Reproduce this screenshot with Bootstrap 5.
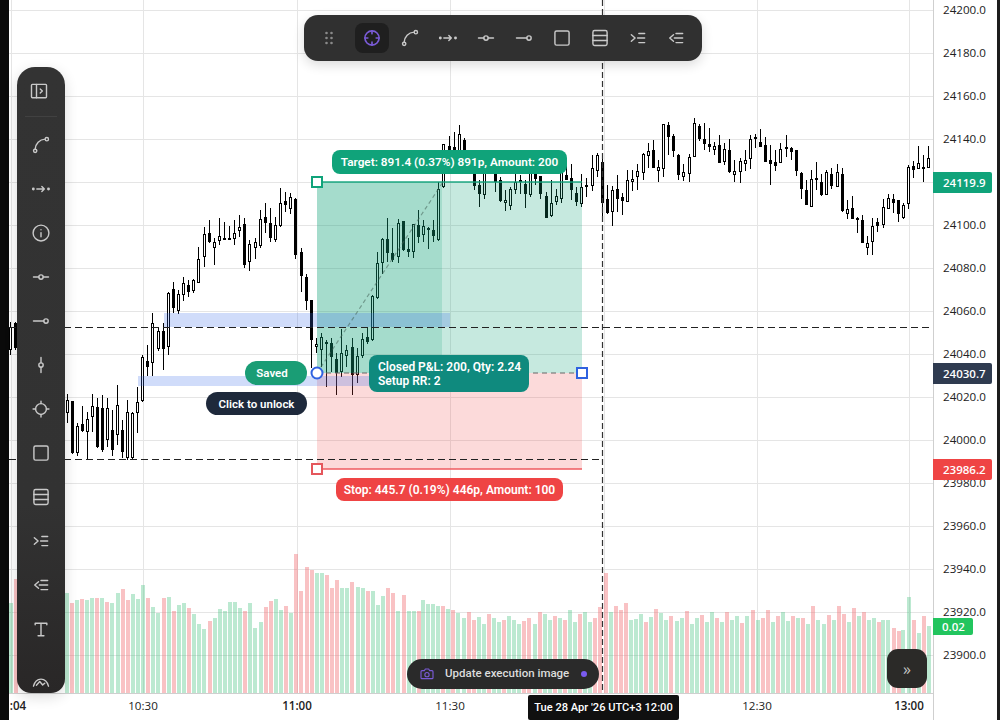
<!DOCTYPE html>
<html lang="en">
<head>
  <meta charset="UTF-8">
  <meta name="viewport" content="width=device-width, initial-scale=1.0">
  <title>Chart</title>
  <link href="https://cdn.jsdelivr.net/npm/bootstrap@5.3.0/dist/css/bootstrap.min.css" rel="stylesheet">
  <style>
    body { margin: 0; background: #fff; overflow: hidden; font-family: Roboto, "Liberation Sans", sans-serif; }
    .term { width: 1000px; height: 720px; overflow: hidden; }
    .edge-left { width: 9px; background: #0a0a0a; }
    .edge-right { width: 3px; background: #1c1c1c; }
    .plot { left: 0; top: 0; }

    .ic { width: 20px; height: 20px; fill: none; stroke: currentColor; stroke-width: 1.7; stroke-linecap: round; stroke-linejoin: round; }
    .tool-btn { width: 34px; height: 30px; padding: 0; border: 0; border-radius: 8px; color: #c9c9c9; display: flex; align-items: center; justify-content: center; }
    .tool-btn.is-on { background: #1f1f1f; color: #7a5bd6; }

    .side-bar { left: 17px; top: 67px; width: 48px; height: 626px; padding-top: 2px; overflow: hidden; border-radius: 18px 18px 14px 14px; background: linear-gradient(#333333, #323232 70%, #292727); box-shadow: 0 4px 14px rgba(0,0,0,.14); }
    .side-bar .tool-btn { height: 44px; flex: none; }
    .side-first .ic { margin-right: 5px; }
    .side-rule { width: 32px; height: 1px; background: #414141; margin: 3px 0 6px; flex: none; }
    .side-last { margin-top: 9px; }

    .top-bar { left: 304px; top: 15px; width: 398px; height: 46px; padding: 0 9px 0 15px; gap: 4px; border-radius: 14px; background: #303030; box-shadow: 0 4px 12px rgba(0,0,0,.14); }
    .grip { width: 20px; height: 20px; margin-right: 12px; color: #8a8a8a; }

    .tag { color: #fff; font-size: 12px; font-weight: 600; line-height: 14px; white-space: nowrap; }
    .tag-target { left: 332px; top: 150px; width: 235px; height: 24px; font-size: 11.8px; border-radius: 8px; background: #10a37a; }
    .tag-saved { left: 245px; top: 361px; width: 62px; height: 24px; padding-right: 8px; font-size: 11.5px; background: #1a9d75; }
    .tag-unlock { left: 206px; top: 392px; width: 101px; height: 23px; font-size: 11.5px; background: #1e293b; }
    .tag-closed { left: 369px; top: 355px; width: 160px; height: 37px; padding: 5px 0 0 9px; border-radius: 8px; background: #0f8a7e; }
    .tag-stop { left: 336px; top: 478px; width: 227px; height: 23px; border-radius: 8px; background: #ef4444; }

    .price { left: 943px; color: #222; font: 11.6px/14px "Open Sans", "Liberation Sans", sans-serif; transform: translateY(-7px); }
    .tick { top: 699px; color: #222; font: 11.6px/14px "Open Sans", "Liberation Sans", sans-serif; transform: translateX(-50%); }
    .tick-hour { font-weight: 600; }
    .price-tag { left: 933px; width: 59px; height: 21px; padding-left: 10px; color: #fff; font: 600 11.5px/21px "Open Sans", "Liberation Sans", sans-serif; border-radius: 0 2px 2px 0; }
    .tag-up { top: 172px; background: #10a37a; }
    .tag-entry { top: 363px; background: #2f3b50; }
    .tag-down { top: 459px; background: #ef4444; }
    .tag-vol { top: 618px; width: 40px; height: 17px; padding-left: 9px; line-height: 17px; background: #22c55e; }

    .time-tag { left: 528px; top: 695px; width: 151px; height: 25px; background: #101010; color: #fff; font: 500 11.1px/25px Roboto, "Liberation Sans", sans-serif; text-align: center; border-radius: 2px; }
    .update-pill { left: 407px; top: 659px; width: 192px; height: 30px; padding: 0 12px; gap: 10px; background: #2a2a2a; border-radius: 15px; color: #dcdcdc; font-size: 11.5px; font-weight: 500; white-space: nowrap; }
    .update-pill .ic { width: 16px; height: 16px; color: #7a5bd6; flex: none; }
    .pill-dot { width: 6px; height: 6px; background: #7a5bf0; border-radius: 50%; margin-left: auto; flex: none; }
    .more-btn { left: 887px; top: 649px; width: 40px; height: 39px; padding: 0; border: 0; border-radius: 11px; background: #2b2a28; color: #c4c4c4; font: 400 16px/32px "Open Sans", sans-serif; }
  </style>
</head>
<body>

<svg width="0" height="0" class="position-absolute">
  <symbol id="i-panel" viewBox="0 0 24 24"><rect x="3" y="4" width="18" height="16" rx="1"/><path d="M9 4v16M13.500 9.500l2.500 2.500-2.500 2.500"/></symbol>
  <symbol id="i-curve" viewBox="0 0 24 24"><circle cx="5" cy="19" r="2"/><circle cx="19" cy="5" r="2"/><path d="M5 17C5.500 10.500 10 5.500 17 5"/></symbol>
  <symbol id="i-arrow" viewBox="0 0 24 24"><path d="M7 12h9M13 9l3 3-3 3"/><circle cx="2.800" cy="12" r=".9"/><circle cx="21" cy="12" r=".9"/></symbol>
  <symbol id="i-info" viewBox="0 0 24 24"><circle cx="12" cy="12" r="9.500"/><path d="M12 11.500v5M12 8v.2"/></symbol>
  <symbol id="i-hline" viewBox="0 0 24 24"><circle cx="12" cy="12" r="2.600"/><path d="M3 12h6.400M14.600 12H21"/></symbol>
  <symbol id="i-ray" viewBox="0 0 24 24"><circle cx="18" cy="12" r="2.600"/><path d="M3 12h12.400"/></symbol>
  <symbol id="i-vline" viewBox="0 0 24 24"><circle cx="12" cy="12" r="2.600"/><path d="M12 3v6.400M12 14.600V21"/></symbol>
  <symbol id="i-target" viewBox="0 0 24 24"><circle cx="12" cy="12" r="6.500"/><path d="M12 2.500v3M12 18.500v3M2.500 12h3M18.500 12h3"/></symbol>
  <symbol id="i-aim" viewBox="0 0 24 24"><circle cx="12" cy="12" r="8.500" stroke-width="2"/><path d="M12 3.500v3.500M12 17v3.500M3.500 12H7M17 12h3.500" stroke-width="2"/></symbol>
  <symbol id="i-box" viewBox="0 0 24 24"><rect x="3.500" y="3.500" width="17" height="17" rx="2"/></symbol>
  <symbol id="i-rows" viewBox="0 0 24 24"><rect x="3.500" y="3" width="17" height="18" rx="2"/><path d="M3.500 9h17M3.500 15h17"/></symbol>
  <symbol id="i-indent" viewBox="0 0 24 24"><path d="M4 8l4.500 4L4 16M13 6.500h7M11.500 12H20M13 17.500h7"/></symbol>
  <symbol id="i-outdent" viewBox="0 0 24 24"><path d="M9 8l-4.500 4L9 16M12 6.500h8M10 12h10M12 17.500h8"/></symbol>
  <symbol id="i-text" viewBox="0 0 24 24"><path d="M5 7V5h14v2M12 5v15M8.500 20h7"/></symbol>
  <symbol id="i-gauge" viewBox="0 0 24 24"><path d="M3 17c1.500-6 5-8.500 9-8.500s7.500 2.500 9 8.500M6.500 16l4-4.500 3.500 4 2.500-2"/></symbol>
  <symbol id="i-camera" viewBox="0 0 24 24"><path d="M3 8.500a1.500 1.500 0 0 1 1.500-1.500H8l1.500-2.500h5L16 7h3.500A1.500 1.500 0 0 1 21 8.500v9a1.500 1.500 0 0 1-1.500 1.500h-15A1.500 1.500 0 0 1 3 17.500z"/><circle cx="12" cy="13" r="3.200"/></symbol>
  <symbol id="i-grip" viewBox="0 0 20 20"><g fill="currentColor" stroke="none"><circle cx="7.500" cy="5" r="1.300"/><circle cx="12.500" cy="5" r="1.300"/><circle cx="7.500" cy="10" r="1.300"/><circle cx="12.500" cy="10" r="1.300"/><circle cx="7.500" cy="15" r="1.300"/><circle cx="12.500" cy="15" r="1.300"/></g></symbol>
</svg>

<div class="term position-relative d-flex">
  <div class="edge-left flex-shrink-0"></div>
  <div class="flex-grow-1"></div>
  <div class="edge-right flex-shrink-0"></div>

  <svg id="plot" class="plot position-absolute" width="997" height="720"></svg>

  <div id="axis"></div>

  <div class="tag tag-target position-absolute d-flex align-items-center justify-content-center">Target: 891.4 (0.37%) 891p, Amount: 200</div>
  <div class="tag tag-saved position-absolute rounded-pill d-flex align-items-center justify-content-center">Saved</div>
  <div class="tag tag-unlock position-absolute rounded-pill d-flex align-items-center justify-content-center">Click to unlock</div>
  <div class="tag tag-closed position-absolute">Closed P&amp;L: 200, Qty: 2.24<br>Setup RR: 2</div>
  <div class="tag tag-stop position-absolute d-flex align-items-center justify-content-center">Stop: 445.7 (0.19%) 446p, Amount: 100</div>

  <div class="price-tag tag-up position-absolute">24119.9</div>
  <div class="price-tag tag-entry position-absolute">24030.7</div>
  <div class="price-tag tag-down position-absolute">23986.2</div>
  <div class="price-tag tag-vol position-absolute">0.02</div>
  <div class="time-tag position-absolute">Tue 28 Apr '26 UTC+3 12:00</div>

  <!-- left tools -->
  <div class="side-bar position-absolute d-flex flex-column align-items-center">
    <button class="btn tool-btn side-first"><svg class="ic"><use href="#i-panel"/></svg></button>
    <div class="side-rule"></div>
    <button class="btn tool-btn"><svg class="ic"><use href="#i-curve"/></svg></button>
    <button class="btn tool-btn"><svg class="ic"><use href="#i-arrow"/></svg></button>
    <button class="btn tool-btn"><svg class="ic"><use href="#i-info"/></svg></button>
    <button class="btn tool-btn"><svg class="ic"><use href="#i-hline"/></svg></button>
    <button class="btn tool-btn"><svg class="ic"><use href="#i-ray"/></svg></button>
    <button class="btn tool-btn"><svg class="ic"><use href="#i-vline"/></svg></button>
    <button class="btn tool-btn"><svg class="ic"><use href="#i-target"/></svg></button>
    <button class="btn tool-btn"><svg class="ic"><use href="#i-box"/></svg></button>
    <button class="btn tool-btn"><svg class="ic"><use href="#i-rows"/></svg></button>
    <button class="btn tool-btn"><svg class="ic"><use href="#i-indent"/></svg></button>
    <button class="btn tool-btn"><svg class="ic"><use href="#i-outdent"/></svg></button>
    <button class="btn tool-btn"><svg class="ic"><use href="#i-text"/></svg></button>
    <button class="btn tool-btn side-last"><svg class="ic"><use href="#i-gauge"/></svg></button>
  </div>

  <!-- top tools -->
  <div class="top-bar position-absolute d-flex align-items-center">
    <svg class="grip"><use href="#i-grip"/></svg>
    <button class="btn tool-btn is-on"><svg class="ic"><use href="#i-aim"/></svg></button>
    <button class="btn tool-btn"><svg class="ic"><use href="#i-curve"/></svg></button>
    <button class="btn tool-btn"><svg class="ic"><use href="#i-arrow"/></svg></button>
    <button class="btn tool-btn"><svg class="ic"><use href="#i-hline"/></svg></button>
    <button class="btn tool-btn"><svg class="ic"><use href="#i-ray"/></svg></button>
    <button class="btn tool-btn"><svg class="ic"><use href="#i-box"/></svg></button>
    <button class="btn tool-btn"><svg class="ic"><use href="#i-rows"/></svg></button>
    <button class="btn tool-btn"><svg class="ic"><use href="#i-indent"/></svg></button>
    <button class="btn tool-btn"><svg class="ic"><use href="#i-outdent"/></svg></button>
  </div>

  <div class="update-pill position-absolute d-flex align-items-center">
    <svg class="ic"><use href="#i-camera"/></svg>
    <span>Update execution image</span>
    <span class="pill-dot"></span>
  </div>
  <button class="btn more-btn position-absolute">&raquo;</button>
</div>

<script>
  const PLOT_R = 933, PLOT_B = 693;
  let out = '';

  function line(x1, y1, x2, y2, color, width, dash) {
    out += `<line x1="${x1}" y1="${y1}" x2="${x2}" y2="${y2}" stroke="${color}" stroke-width="${width || 1}"${dash ? ` stroke-dasharray="${dash}"` : ''}/>`;
  }
  function box(x, y, w, h, fill) {
    out += `<rect x="${x}" y="${y}" width="${w}" height="${h}" fill="${fill}"/>`;
  }

  // grid
  for (let y = 10; y < PLOT_B; y += 43) line(9, y + .5, PLOT_R, y + .5, '#e5e5e5');
  [11, 143, 297, 450, 604, 757, 909].forEach(x => line(x + .5, 0, x + .5, PLOT_B, '#e5e5e5'));

  // volume: [x, top, isRed] read off the reference, scale s
  function addBars(ox, oy, s, rows) {
    rows.forEach(([zx, ztop, red]) => {
      const x = Math.round(ox + zx / s), top = Math.round(oy + ztop / s);
      box(x - 2, top, 4, PLOT_B - top, red ? 'rgba(240,110,115,.42)' : 'rgba(60,190,120,.34)');
    });
  }
  addBars(0, 540, 3, [[33,188,0],[47,118,1],[200,160,0],[215,190,1],[230,180,0],[245,177,1],[260,180,0],[275,174,0],[290,174,1],[305,174,0],[322,186,1],[337,190,0],[353,160,0],[368,148,1],[383,180,1],[398,162,0],[413,177,0],[428,135,0],[443,174,1],[458,201,0],[473,219,0],[491,174,1],[506,171,0],[521,214,1],[536,195,0],[551,189,0],[566,204,1],[581,222,0],[596,252,0],[611,267,0],[629,243,1],[644,234,0],[659,207,0],[674,213,0],[689,186,0],[704,186,0],[719,204,0],[734,213,1],[749,189,0],[764,264,0],[782,246,0],[797,201,1],[812,183,1],[827,177,0],[842,210,0],[857,198,1],[872,219,0],[887,42,1],[902,153,1],[920,81,1],[935,90,1],[950,99,0],[965,99,0],[980,105,1],[995,144,1],[1010,120,1],[1025,144,0],[1040,144,0],[1055,126,1],[1073,141,0],[1088,144,0],[1103,153,1],[1118,153,0],[1133,195,0],[1148,168,0],[1163,144,1],[1178,159,1],[1193,213,0],[1212,165,1],[1227,213,0],[1242,213,0],[1257,213,1]]);
  // rest of the bars: negative top = red
  [600,604,604,606,-606,609,-610,613,618,-612,-620,617,624,-614,618,622,-620,616,620,624,-621,-618,624,-612,614,620,-616,618,-620,610,622,-614,612,622,-618,-607,-573,612,-606,-610,-603,620,619,614,-622,617,-609,613,620,-616,621,618,-611,624,618,-615,622,612,-618,622,-612,620,616,-623,616,-610,620,-618,-610,622,-616,612,621,-616,618,-618,624,-606,620,624,-615,620,-606,-614,622,-608,616,-612,620,618,-622].forEach((v, i) => {
    addBars(423 + i * 5.07, 0, 1, [[0, Math.abs(v), v < 0 ? 1 : 0]]);
  });
  addBars(880, 360, 3, [[10,780,0],[25,780,0],[42,803,1],[57,812,1],[70,810,0],[87,710,0],[102,780,1],[117,820,0],[132,768,1],[147,798,0]]);

  // candles: [x, high, bodyTop, bodyBottom, low, filled] read off zoomed crops
  function addCandles(ox, oy, s, rows) {
    rows.forEach(([zx, h, t, b, l, f]) => {
      const x = Math.round(ox + zx / s);
      const [yh, yt, yb, yl] = [h, t, b, l].map(v => Math.round(oy + v / s));
      box(x - 1, yh, 1, yl - yh, '#000');
      out += `<rect x="${x - 1.5}" y="${yt + .5}" width="2" height="${Math.max(yb - yt - 1, 1)}" fill="${f ? '#000' : '#fff'}" stroke="#000"/>`;
    });
  }
  addCandles(0, 0, 1, [[11,322,327,350,355,0],[16,322,323,348,350,1],[103,395,408,450,452,1],[108,398,408,440,447,0],[113,410,430,450,456,1],[118,385,405,435,445,0],[123,420,430,452,458,1],[128,400,412,458,460,0]]);
  addCandles(0, 380, 3, [[203,42,60,100,130,0],[218,62,62,220,222,1],[233,130,138,220,228,0],[248,78,132,152,155,1],[263,95,118,157,238,0],[278,42,78,112,155,0],[293,55,82,200,203,1]]);
  addCandles(130, 340, 3, [[10,215,220,355,358,0],[25,140,185,218,278,0],[40,45,52,183,185,0],[55,15,62,80,108,1],[70,-82,-52,68,108,0]]);
  addCandles(130, 140, 3, [[88,560,572,628,632,0],[103,550,572,628,690,1],[118,455,460,620,645,0],[133,427,448,503,520,1],[148,450,462,512,523,0],[163,412,430,466,482,0],[178,420,435,455,470,1],[193,418,420,452,458,0],[208,322,358,428,428,0],[226,260,283,352,382,0],[241,240,280,307,308,1],[256,295,307,325,375,0],[271,235,289,302,315,0],[286,245,293,294,295,1],[301,258,293,298,298,0],[316,240,280,298,315,0],[331,225,262,272,290,0],[346,235,252,375,383,1],[361,300,313,365,392,0],[379,295,307,325,358,0],[394,210,238,318,325,0],[409,190,232,248,280,1],[424,205,250,293,307,1],[439,230,256,300,305,0],[454,145,190,258,260,0],[469,155,183,195,215,1],[484,158,172,208,222,0],[499,175,178,344,358,1],[517,325,337,408,455,1],[532,403,410,482,510,1]]);
  addCandles(300, 320, 3, [[37,-60,-60,60,145,1],[52,55,72,82,100,0],[67,40,52,90,140,0],[82,60,65,72,200,1],[97,55,68,112,155,1],[112,100,117,158,225,1],[127,28,100,155,172,0],[142,75,90,107,140,0],[160,55,82,165,225,1],[175,85,108,165,190,0],[190,40,58,107,115,0],[205,25,52,67,72,1]]);
  addCandles(130, 140, 3, [[730,465,468,600,602,0],[745,335,370,475,478,0],[760,295,297,368,402,0],[775,235,296,338,365,1],[790,265,340,360,365,1],[808,238,248,350,368,0],[823,243,243,330,333,1],[838,295,327,335,350,1],[853,252,253,335,353,0],[868,210,255,290,310,1],[883,240,258,285,305,0],[898,262,265,268,326,1],[913,240,271,287,305,1],[928,125,148,300,303,0]]);
  addCandles(435, 120, 3, [[28,72,72,200,205,0],[46,48,78,100,110,1],[61,37,82,110,120,1],[76,15,43,100,110,0],[91,55,60,105,115,1],[106,90,95,110,125,1],[121,120,160,197,210,1],[136,180,195,222,260,1],[151,130,160,225,236,0],[184,140,160,186,215,1],[199,172,180,243,245,1],[214,210,240,250,272,0],[229,200,207,257,270,0],[244,150,185,210,222,0],[259,165,180,187,222,1],[274,180,193,222,264,1],[289,140,160,225,232,0],[304,140,160,178,195,1],[319,168,168,222,236,1],[337,215,228,293,293,1],[352,180,250,288,290,0],[367,208,228,245,255,0],[382,125,150,238,248,0],[397,120,165,180,180,1],[412,133,175,210,240,1],[427,200,218,247,258,1]]);
  addCandles(580, 100, 3, [[7,222,262,312,320,0],[22,235,255,260,290,1],[40,165,205,258,272,0],[55,158,165,212,230,0],[70,160,187,308,350,1],[85,255,298,340,342,1],[100,258,270,335,378,0],[115,225,268,296,335,1],[130,280,292,302,345,1],[145,210,240,305,305,0],[160,210,238,245,272,0],[175,192,214,230,270,0],[193,158,162,218,240,0],[208,130,154,167,205,0],[223,120,151,203,205,1],[238,180,202,212,245,0],[253,72,72,208,230,0],[268,66,76,112,165,1],[283,102,108,152,172,1],[298,162,165,226,240,1],[313,193,217,230,243,0],[331,162,171,223,245,0],[346,55,70,170,170,0],[361,72,78,116,122,1],[376,70,118,131,150,1],[391,85,133,140,157,1],[406,125,139,149,165,0],[421,105,136,188,188,1],[436,130,148,185,194,0],[451,117,151,215,218,1],[466,180,212,224,245,0],[484,175,183,217,250,0],[499,150,181,191,212,0],[514,105,118,176,206,0],[529,103,111,116,143,1],[544,87,127,140,140,1],[559,110,136,185,185,1],[574,135,181,193,255,1],[589,150,187,197,212,1],[604,130,148,190,190,0],[622,105,141,143,172,1],[637,140,145,155,180,1],[652,150,151,212,228,1],[667,215,220,268,296,1],[682,240,270,314,314,1],[697,210,238,320,322,0],[712,186,235,238,270,1],[727,222,247,286,288,1],[742,210,216,284,285,0],[757,205,223,257,268,1],[775,192,216,260,260,0],[790,205,223,334,336,1],[805,300,328,341,358,0],[820,288,324,356,358,1],[835,350,355,361,400,0],[850,345,360,428,430,1],[865,408,430,445,465,0],[880,355,378,425,465,0],[895,354,367,377,397,1],[913,297,322,374,384,0],[928,282,295,326,326,0],[943,282,298,310,338,1],[958,300,301,341,365,1],[973,310,316,355,358,0],[988,195,202,313,326,0],[1003,183,199,209,235,1],[1018,138,190,206,206,0],[1033,165,202,205,245,1],[1048,138,175,203,204,0]]);

  // position tool sits over the candles
  box(317, 182, 265, 191, 'rgba(16,163,122,.24)');
  box(317, 182, 125, 191, 'rgba(16,163,122,.18)');
  box(317, 373, 265, 96, 'rgba(239,68,68,.2)');
  box(164, 313, 286, 14, 'rgba(59,110,235,.24)');
  box(138, 376, 232, 10, 'rgba(59,110,235,.24)');
  line(317, 182, 582, 182, 'rgba(16,163,122,.7)', 2);
  line(317, 469, 582, 469, '#ef5a5f', 1.5);
  line(317, 373, 582, 373, '#666', 1, '5 4');
  line(317, 373, 443, 182, 'rgba(70,100,90,.55)', 1.2, '4 3');

  // crosshair and price lines
  line(9, 327.5, PLOT_R, 327.5, '#222', 1, '7 4');
  line(9, 459.5, 600, 459.5, '#222', 1, '7 4');
  line(602.5, 0, 602.5, PLOT_B, '#333', 1.2, '6 3');

  // axes
  line(PLOT_R + .5, 0, PLOT_R + .5, 720, '#cfcfcf');
  line(9, PLOT_B + .5, PLOT_R, PLOT_B + .5, '#cfcfcf');

  // handles
  const handle = (x, y, color) => { out += `<rect x="${x - 5}" y="${y - 5}" width="10" height="10" fill="#fff" stroke="${color}" stroke-width="2"/>`; };
  handle(317, 182, '#10a37a');
  handle(317, 469, '#e5575c');
  handle(582, 373, '#2f62e0');
  out += '<circle cx="317" cy="373" r="5.5" fill="#fff" stroke="#2f62e0" stroke-width="2"/>';

  document.getElementById('plot').innerHTML = out;

  // axis labels
  let labels = '';
  for (let i = 0; i < 16; i++) {
    labels += `<div class="price position-absolute" style="top:${10 + i * 43}px">${(24200 - i * 20).toFixed(1)}</div>`;
  }
  [[18, ':04', 1], [143, '10:30', 0], [297, '11:00', 1], [450, '11:30', 0], [757, '12:30', 0], [909, '13:00', 1]].forEach(([x, text, hour]) => {
    labels += `<div class="tick position-absolute${hour ? ' tick-hour' : ''}" style="left:${x}px">${text}</div>`;
  });
  document.getElementById('axis').innerHTML = labels;
</script>
<script src="https://cdn.jsdelivr.net/npm/bootstrap@5.3.0/dist/js/bootstrap.bundle.min.js"></script>
</body>
</html>
